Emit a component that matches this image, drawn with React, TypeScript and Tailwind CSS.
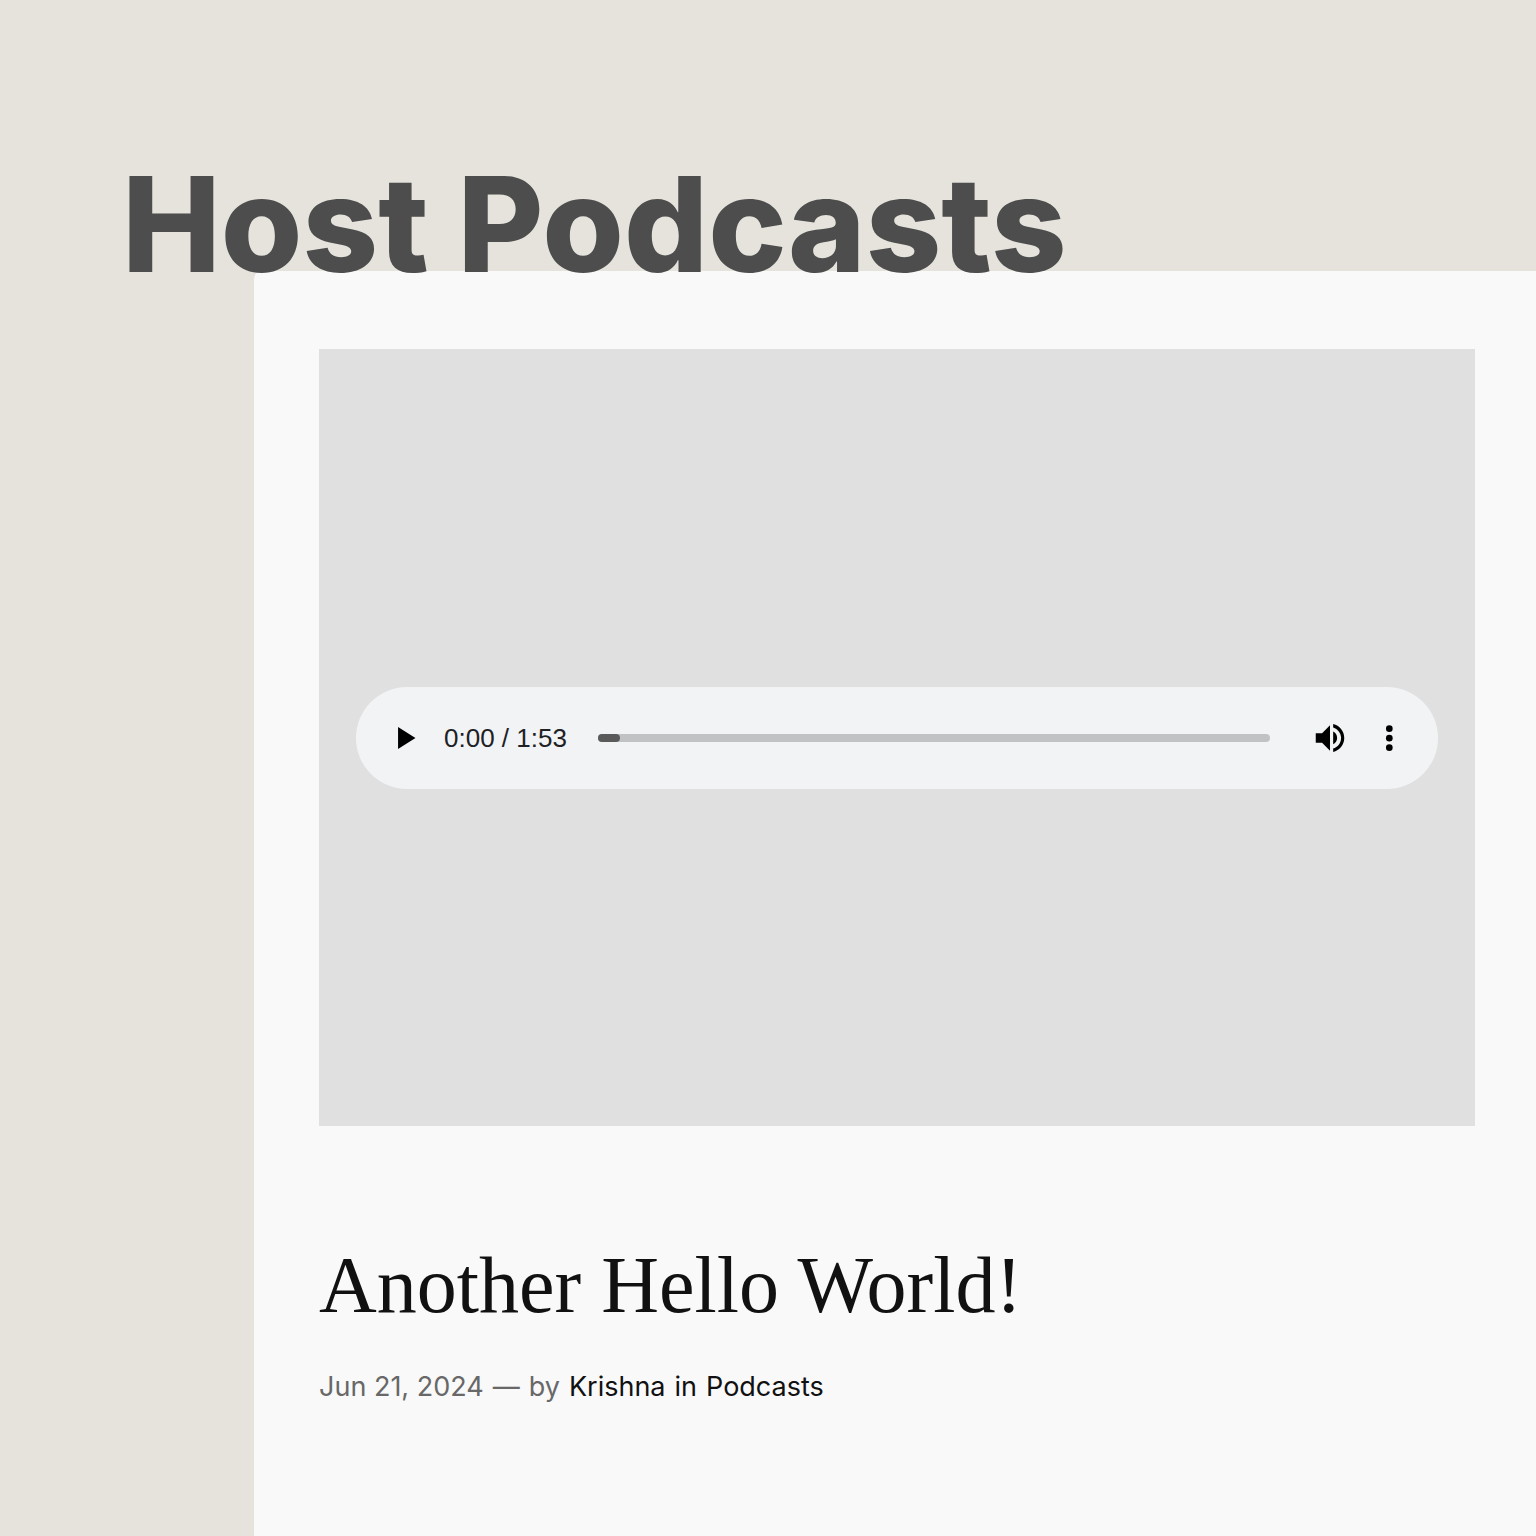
function PlayIcon() {
  return (
    <svg viewBox="0 0 24 24" className="size-[38px]" fill="currentColor" aria-hidden="true">
      <path d="M7.6 5v14l11-7z" />
    </svg>
  );
}

function VolumeIcon() {
  return (
    <svg viewBox="0 0 24 24" className="size-[38px]" fill="currentColor" aria-hidden="true">
      <path d="M3 9v6h4l5 5V4L7 9H3zm13.5 3c0-1.77-1.02-3.29-2.5-4.03v8.05c1.48-.73 2.5-2.25 2.5-4.02zM14 3.23v2.06c2.89.86 5 3.54 5 6.71s-2.11 5.85-5 6.71v2.06c4.01-.91 7-4.49 7-8.77s-2.99-7.86-7-8.77z" />
    </svg>
  );
}

function MoreIcon() {
  return (
    <svg viewBox="0 0 24 24" className="size-[38px]" fill="currentColor" aria-hidden="true">
      <circle cx="12.2" cy="6.1" r="2.1" />
      <circle cx="12.2" cy="12.1" r="2.1" />
      <circle cx="12.2" cy="18.1" r="2.1" />
    </svg>
  );
}

function AudioPlayer() {
  return (
    <div className="flex h-[102px] w-full items-center rounded-full bg-[#f1f3f4] px-[30px] text-black">
      <button type="button" aria-label="Play" className="shrink-0">
        <PlayIcon />
      </button>
      <span className="ml-5 shrink-0 font-['Liberation_Sans',sans-serif] text-[26px] leading-[40px] text-[#202124]">
        0:00 / 1:53
      </span>
      <input
        type="range"
        aria-label="Seek"
        min={0}
        max={113}
        defaultValue={0}
        className="ml-[31px] h-2 min-w-0 flex-1 appearance-none rounded-full bg-[#c1c2c3] [&::-webkit-slider-thumb]:h-2 [&::-webkit-slider-thumb]:w-[22px] [&::-webkit-slider-thumb]:appearance-none [&::-webkit-slider-thumb]:rounded-full [&::-webkit-slider-thumb]:bg-[#5a5a5b]"
      />
      <button type="button" aria-label="Mute" className="ml-[41px] shrink-0">
        <VolumeIcon />
      </button>
      <button type="button" aria-label="More options" className="ml-[21px] shrink-0">
        <MoreIcon />
      </button>
    </div>
  );
}

export default function App() {
  return (
    <div className="flex min-h-screen flex-col bg-[#e5e3dc] pt-[158px]">
      <h1 className="relative z-10 -mb-[19px] pl-[122px] font-['Inter',sans-serif] text-[132px] leading-none font-extrabold text-[#4d4d4d]">
        Host Podcasts
      </h1>
      <main className="ml-[254px] flex-1 rounded-tl-lg bg-[#f9f9f9] pt-[78px] pr-[61px] pl-[65px]">
        <article>
          <div className="flex aspect-[1156/777] items-center bg-[#e0e0e0] px-[37px]">
            <AudioPlayer />
          </div>
          <h2 className="mt-[115px] font-['Liberation_Serif',serif] text-[80px] leading-[88px] text-[#111111]">
            Another Hello World!
          </h2>
          <p className="mt-[38px] flex gap-[9px] font-['Inter',sans-serif] text-[27px] leading-[40px] text-[#686868]">
            <time dateTime="2024-06-21">Jun 21, 2024</time>
            <span>—</span>
            <span>by</span>
            <a href="#krishna" className="text-[#111111]">Krishna</a>
            <span className="text-[#111111]">in</span>
            <a href="#podcasts" className="text-[#111111]">Podcasts</a>
          </p>
        </article>
      </main>
    </div>
  );
}
